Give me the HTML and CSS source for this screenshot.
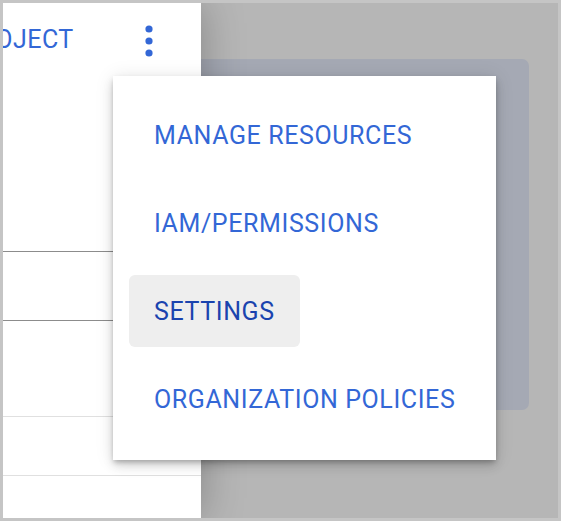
FILE: index.html
```html
<!DOCTYPE html>
<html>
<head>
<meta charset="utf-8">
<link rel="stylesheet" href="styles.css">
</head>
<body>
<div class="screen">
  <aside class="drawer">
    <div class="drawer-head">
      <span class="project">PROJECT</span>
      <button class="kebab" aria-label="More">
        <svg width="12" height="36" viewBox="0 0 12 36"><circle cx="6" cy="6" r="3.6"/><circle cx="6" cy="18" r="3.6"/><circle cx="6" cy="30" r="3.6"/></svg>
      </button>
    </div>
    <div class="row row-a"></div>
    <div class="row row-b"></div>
    <div class="row row-c"></div>
    <div class="row row-d"></div>
  </aside>
  <main class="main">
    <div class="card"></div>
  </main>
  <ul class="menu">
    <li class="item">MANAGE RESOURCES</li>
    <li class="item">IAM/PERMISSIONS</li>
    <li class="item active">SETTINGS</li>
    <li class="item">ORGANIZATION POLICIES</li>
  </ul>
</div>
</body>
</html>
```
FILE: styles.css
```css
html, body {
  margin: 0;
  padding: 0;
}
body {
  background: #c5c5c5;
  width: 561px;
  height: 521px;
  overflow: hidden;
  font-family: Roboto, "Noto Sans", sans-serif;
}
.screen {
  position: relative;
  margin: 3px;
  width: 555px;
  height: 515px;
  background: #b6b6b6;
  display: flex;
  overflow: hidden;
}
.drawer {
  position: relative;
  z-index: 1;
  width: 198px;
  flex: none;
  background: #fff;
  box-shadow: 0 0 40px rgba(0, 0, 0, 0.28);
  display: flex;
  flex-direction: column;
  overflow: hidden;
}
.drawer-head {
  height: 76px;
  display: flex;
  align-items: flex-start;
  flex: none;
}
.project {
  margin-left: -40px;
  margin-top: 22px;
  font-size: 25px;
  font-weight: 400;
  color: #3367d6;
  white-space: nowrap;
  letter-spacing: 0.5px;
}
.kebab {
  margin-left: auto;
  margin-right: 46px;
  margin-top: 20px;
  padding: 0;
  border: 0;
  background: none;
  display: flex;
}
.kebab svg {
  fill: #3367d6;
}
.row {
  flex: none;
  border-bottom: 1px solid #e0e0e0;
}
.row-a { height: 172px; border-bottom-color: #8c8c8c; }
.row-b { height: 68px; border-bottom-color: #8c8c8c; }
.row-c { height: 95px; }
.row-d { height: 58px; }
.main {
  flex: 1;
  padding: 56px 29px 0 0;
}
.card {
  height: 351px;
  background: #a5a9b4;
  border-radius: 0 7px 7px 0;
}
.menu {
  position: absolute;
  z-index: 2;
  left: 110px;
  top: 73px;
  width: 351px;
  margin: 0;
  padding: 23px 16px 25px;
  list-style: none;
  background: #fff;
  box-shadow: 0 3px 5px -1px rgba(0,0,0,.25), 0 6px 10px 0 rgba(0,0,0,.12), 0 1px 18px 0 rgba(0,0,0,.1);
  display: flex;
  flex-direction: column;
  align-items: flex-start;
  gap: 16px;
}
.item {
  height: 72px;
  box-sizing: border-box;
  padding: 0 25px;
  display: flex;
  align-items: center;
  font-size: 25px;
  font-weight: 400;
  letter-spacing: 0.6px;
  color: #3367d6;
  border-radius: 6px;
  white-space: nowrap;
}
.item.active {
  background: #eeeeee;
  color: #1a43ae;
}
```
